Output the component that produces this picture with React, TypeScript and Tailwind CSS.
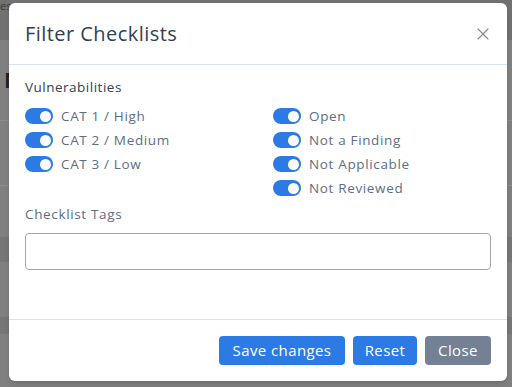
import { X } from "lucide-react";

const font = { fontFamily: '"Open Sans", "Liberation Sans", sans-serif' };

function Toggle({ label }: { label: string }) {
  return (
    <label className="flex h-6 items-center gap-2">
      <span className="relative h-4 w-7 shrink-0 rounded-full bg-[#2c7be5]">
        <span className="absolute right-[2px] top-[2.5px] h-[11px] w-[11px] rounded-full bg-white" />
      </span>
      <span className="text-[13.5px] tracking-[0.65px] text-[#5e6e82]">{label}</span>
    </label>
  );
}

export default function App() {
  const left = ["CAT 1 / High", "CAT 2 / Medium", "CAT 3 / Low"];
  const right = ["Open", "Not a Finding", "Not Applicable", "Not Reviewed"];

  return (
    <div className="relative h-[387px] w-[512px] overflow-hidden bg-[#808080]" style={font}>
      {/* page behind the overlay */}
      <div className="flex h-full flex-col">
        <div className="h-10 bg-[#717171] pt-[1px] text-[11px] leading-[10px] text-[#3a3a3a]">es</div>
        <div className="h-[81px] border-b border-[#8c8c8c] pl-1 pt-[20px] text-[22px] font-bold leading-[38px] text-[#222]">N</div>
        <div className="h-[65px] border-b border-[#8c8c8c]" />
        <div className="h-[51px]" />
        <div className="h-[25px] bg-[#767676]" />
        <div className="h-[55px]" />
        <div className="h-[17px] bg-[#767676]" />
      </div>

      {/* modal */}
      <div className="absolute left-[9px] top-[3px] flex h-[378px] w-[498px] flex-col rounded-md bg-white shadow-md">
        <div className="flex h-[62px] items-center justify-between border-b border-[#d8e2ef] pl-4 pr-[14px]">
          <h5 className="text-[20px] tracking-[0.45px] text-[#344050]">Filter Checklists</h5>
          <X className="h-5 w-5 text-[#8a8a8a]" strokeWidth={1.4} />
        </div>

        <div className="flex-1 px-4 pt-[12px]">
          <div className="text-[13.5px] tracking-[0.5px] text-[#344050]">Vulnerabilities</div>
          <div className="mt-[7px] grid grid-cols-2">
            <div className="flex flex-col">
              {left.map((l) => (
                <Toggle key={l} label={l} />
              ))}
            </div>
            <div className="flex flex-col pl-[15px]">
              {right.map((l) => (
                <Toggle key={l} label={l} />
              ))}
            </div>
          </div>
          <div className="mt-[4px] text-[13.5px] tracking-[0.65px] text-[#5e6e82]">Checklist Tags</div>
          <div className="mt-[8px] h-[37px] rounded border border-[#a5a5a5]" />
        </div>

        <div className="flex h-[62px] items-center justify-end gap-2 border-t border-[#d8e2ef] px-4">
          <button className="h-[29px] w-[126px] rounded bg-[#2c7be5] text-[15px] tracking-[0.4px] text-white">Save changes</button>
          <button className="h-[29px] w-[64px] rounded bg-[#2c7be5] text-[15px] tracking-[0.4px] text-white">Reset</button>
          <button className="h-[29px] w-[66px] rounded bg-[#748194] text-[15px] tracking-[0.4px] text-white">Close</button>
        </div>
      </div>
    </div>
  );
}
